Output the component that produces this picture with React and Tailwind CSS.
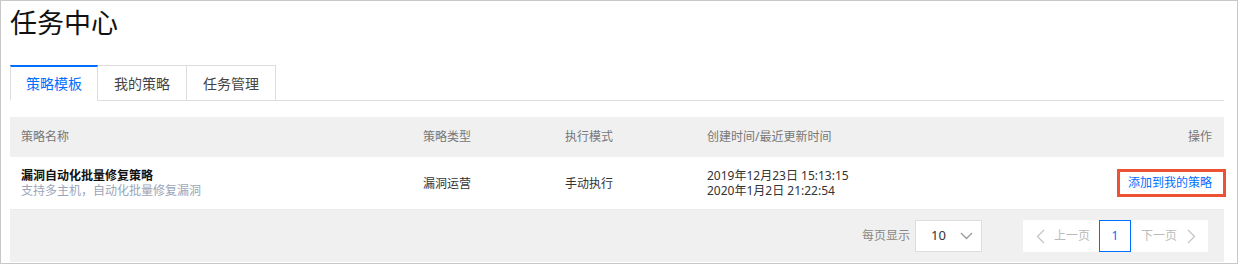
import React from "react";

const columns = ["策略名称", "策略类型", "执行模式", "创建时间/最近更新时间"];

const rows = [
  {
    name: "漏洞自动化批量修复策略",
    desc: "支持多主机，自动化批量修复漏洞",
    type: "漏洞运营",
    mode: "手动执行",
    created: "2019年12月23日 15:13:15",
    updated: "2020年1月2日 21:22:54",
  },
];

const tabs = ["策略模板", "我的策略", "任务管理"];

function ChevronLeft() {
  return (
    <svg width="9" height="15" viewBox="0 0 9 15" fill="none">
      <path d="M8 1L1.5 7.5L8 14" stroke="#c8c8c8" strokeWidth="1.4" />
    </svg>
  );
}

function ChevronRight() {
  return (
    <svg width="9" height="15" viewBox="0 0 9 15" fill="none">
      <path d="M1 1L7.5 7.5L1 14" stroke="#c8c8c8" strokeWidth="1.4" />
    </svg>
  );
}

export default function App() {
  return (
    <div
      className="w-[1238px] h-[264px] bg-white border border-[#c8c8c8] pl-[9px] pr-[13px] overflow-hidden"
      style={{ fontFamily: '"Noto Sans", "Noto Sans CJK SC", sans-serif' }}
    >
      <h1 className="pt-[4px] text-[27px] leading-[36px] text-[#111] font-normal">任务中心</h1>

      <div className="mt-[24px] flex h-[36px] border-b border-[#dddddd]">
        {tabs.map((t, i) =>
          i === 0 ? (
            <div
              key={t}
              className="w-[88px] h-[36px] -mb-px flex items-center justify-center bg-white border border-[#dddddd] border-t-2 border-t-[#006eff] border-b-white text-[14px] text-[#006eff]"
            >
              {t}
            </div>
          ) : (
            <div
              key={t}
              className="w-[89px] h-[35px] flex items-center justify-center border-t border-r border-[#dddddd] text-[14px] text-[#444]"
            >
              {t}
            </div>
          )
        )}
      </div>

      <div className="mt-[16px] text-[12px]">
        <div className="flex items-center h-[40px] bg-[#f0f0f0] text-[#777]">
          <div className="w-[413px] pl-[11px]">{columns[0]}</div>
          <div className="w-[142px]">{columns[1]}</div>
          <div className="w-[142px]">{columns[2]}</div>
          <div className="flex-1">{columns[3]}</div>
          <div className="pr-[12px]">操作</div>
        </div>

        {rows.map((r) => (
          <div key={r.name} className="flex items-center h-[53px] bg-white border-b border-[#ececec] leading-[15px]">
            <div className="w-[413px] pl-[11px]">
              <div className="font-bold text-[#111]">{r.name}</div>
              <div className="text-[#9aa5b8]">{r.desc}</div>
            </div>
            <div className="w-[142px] text-[#333]">{r.type}</div>
            <div className="w-[142px] text-[#333]">{r.mode}</div>
            <div className="flex-1 text-[#333]">
              <div>{r.created}</div>
              <div>{r.updated}</div>
            </div>
            <div className="pr-[12px]">
              <a href="#" className="relative inline-block leading-[18px] text-[#006eff]">
                添加到我的策略
                <span className="absolute -top-[5px] -bottom-[5px] -left-[11px] -right-[14px] border-[3px] border-[#ee5234]" />
              </a>
            </div>
          </div>
        ))}

        <div className="flex items-center justify-end h-[52px] bg-[#f0f0f0] pr-[16px]">
          <span className="text-[#888] mr-[5px]">每页显示</span>
          <div className="w-[67px] h-[32px] bg-white border border-[#dddddd] flex items-center pl-[15px] pr-[8px] justify-between">
            <span className="text-[13px] text-[#333]">10</span>
            <svg width="13" height="8" viewBox="0 0 13 8" fill="none">
              <path d="M1 1L6.5 6.5L12 1" stroke="#999" strokeWidth="1.3" />
            </svg>
          </div>
          <div className="ml-[41px] flex h-[32px] bg-white">
            <div className="w-[76px] flex items-center pl-[13px] gap-[9px] text-[#bbbbbb]">
              <ChevronLeft />
              <span>上一页</span>
            </div>
            <div className="w-[32px] flex items-center justify-center border border-[#006eff] text-[#006eff]">1</div>
            <div className="w-[77px] flex items-center pl-[10px] gap-[10px] text-[#bbbbbb]">
              <span>下一页</span>
              <ChevronRight />
            </div>
          </div>
        </div>
      </div>
    </div>
  );
}
